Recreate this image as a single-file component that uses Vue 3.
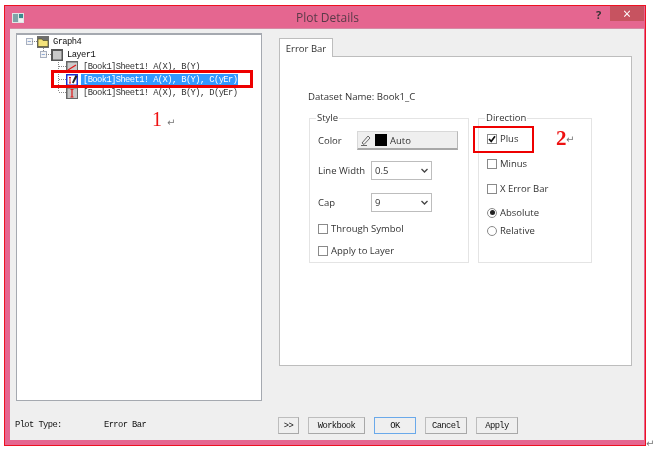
<script setup>
const rows = [
  { text: '[Book1]Sheet1! A(X), B(Y)', kind: 'line' },
  { text: '[Book1]Sheet1! A(X), B(Y), C(yEr)', kind: 'edit', selected: true },
  { text: '[Book1]Sheet1! A(X), B(Y), D(yEr)', kind: 'err' }
]
const actions = [
  { label: 'Workbook', cls: 'wb' },
  { label: 'OK', cls: 'ok' },
  { label: 'Cancel', cls: 'cancel' },
  { label: 'Apply', cls: 'apply' }
]
</script>

<template>
  <div class="shot">
    <div class="window">
      <header class="titlebar">
        <svg class="appicon" width="12" height="10" viewBox="0 0 12 10">
          <rect width="12" height="10" fill="#dfe6e6" />
          <rect x="1" y="1" width="5" height="8" fill="#7fa3a8" />
          <rect x="7" y="1" width="4" height="4" fill="#3c8a8e" />
          <rect x="7" y="6" width="4" height="3" fill="#f2f2f2" />
        </svg>
        <span class="title">Plot Details</span>
        <span class="help">?</span>
        <span class="close">×</span>
      </header>
      <div class="client">
        <div class="main">
          <div class="tree">
            <svg class="lines" width="60" height="70" viewBox="0 0 60 70">
              <path d="M15 6.5H20M26.5 11V16M29 19.5H34M41.5 25V57M42 31.5H49M42 44.5H49M42 57.5H49" stroke="#888" stroke-dasharray="1 1" fill="none" />
            </svg>
            <div class="node n0">
              <span class="exp">−</span>
              <svg class="ico" width="12" height="12" viewBox="0 0 12 12">
                <rect width="12" height="12" fill="#6e6e6e" />
                <path d="M1 3H5L6 4.5H11V10.5H1Z" fill="#f3e27a" stroke="#55502a" stroke-width=".7" />
              </svg>
              <span class="mono">Graph4</span>
            </div>
            <div class="node n1">
              <span class="exp">−</span>
              <svg class="ico" width="12" height="12" viewBox="0 0 12 12">
                <rect width="12" height="12" fill="#555" />
                <rect x="2" y="2" width="8.5" height="8.5" fill="#c8c8c8" />
              </svg>
              <span class="mono">Layer1</span>
            </div>
            <div v-for="r in rows" :key="r.text" class="node n2">
              <svg class="ico" width="12" height="12" viewBox="0 0 12 12">
                <template v-if="r.kind === 'line'">
                  <rect width="12" height="12" fill="#666" />
                  <rect x="1.5" y="1.5" width="9.5" height="9.5" fill="#ccc" />
                  <path d="M2 9L10 4" stroke="#e01818" stroke-width="1.2" />
                </template>
                <template v-else-if="r.kind === 'edit'">
                  <rect x=".75" y=".75" width="10.5" height="10.5" fill="#fff" stroke="#1a2fd0" stroke-width="1.5" />
                  <path d="M4 3.5V9M3 3.5H5M3 9H5" stroke="#e01818" />
                  <path d="M6 8.5L9.5 1L11.5 2.2L7.5 9.5Z" fill="#222" />
                </template>
                <template v-else>
                  <rect width="12" height="12" fill="#666" />
                  <rect x="1.5" y="1.5" width="9.5" height="9.5" fill="#c6c6c6" />
                  <path d="M6 2V10.5M4.5 2.5H7.5M4.5 10H7.5" stroke="#e01818" stroke-width="1.2" />
                </template>
              </svg>
              <span class="mono" :class="{ sel: r.selected }">{{ r.text }}</span>
            </div>
          </div>

          <div class="tabs">
            <div class="tab">Error Bar</div>
            <div class="page">
              <div class="dataset">Dataset Name: Book1_C</div>
              <div class="groups">
                <fieldset class="group style">
                  <legend>Style</legend>
                  <div class="field color">
                    <span class="lab">Color</span>
                    <button class="colorbtn">
                      <svg width="12" height="11" viewBox="0 0 12 11"><path d="M1 10.5H7M2 8L8 1L10 3L4 9.5Z" fill="none" stroke="#444" stroke-width=".8" /></svg>
                      <i class="swatch"></i>
                      <span>Auto</span>
                    </button>
                  </div>
                  <div class="field lw">
                    <span class="lab">Line Width</span>
                    <div class="select"><span>0.5</span><svg width="7" height="5" viewBox="0 0 7 5"><path d="M.5 1L3.5 4L6.5 1" fill="none" stroke="#444" stroke-width="1.3" /></svg></div>
                  </div>
                  <div class="field cap">
                    <span class="lab">Cap</span>
                    <div class="select"><span>9</span><svg width="7" height="5" viewBox="0 0 7 5"><path d="M.5 1L3.5 4L6.5 1" fill="none" stroke="#444" stroke-width="1.3" /></svg></div>
                  </div>
                  <label class="check through"><i class="box"></i>Through Symbol</label>
                  <label class="check layer"><i class="box"></i>Apply to Layer</label>
                </fieldset>
                <fieldset class="group direction">
                  <legend>Direction</legend>
                  <label class="check plus">
                    <i class="box on"><svg width="10" height="10" viewBox="0 0 10 10"><path d="M2 5L4.2 7.4L8 2.2" fill="none" stroke="#111" stroke-width="1.7" /></svg></i>Plus
                  </label>
                  <label class="check minus"><i class="box"></i>Minus</label>
                  <label class="check xerr"><i class="box"></i>X Error Bar</label>
                  <label class="check abs"><i class="radio on"></i>Absolute</label>
                  <label class="check rel"><i class="radio"></i>Relative</label>
                </fieldset>
              </div>
            </div>
          </div>
        </div>

        <footer class="footer">
          <div class="ptype mono"><span class="pl">Plot Type:</span><span>Error Bar</span></div>
          <div class="buttons">
            <button class="btn more mono">&gt;&gt;</button>
            <button v-for="a in actions" :key="a.label" class="btn mono" :class="a.cls">{{ a.label }}</button>
          </div>
        </footer>
      </div>
    </div>

    <i class="mark m1"></i>
    <i class="mark m2"></i>
    <span class="note n-1">1</span>
    <span class="ret r1">↵</span>
    <span class="note n-2">2</span>
    <span class="ret r2">↵</span>
    <span class="ret r3">↵</span>
  </div>
</template>

<style>
html, body { margin: 0; background: #fff; }
</style>

<style scoped>
.shot {
  position: relative;
  width: 655px;
  height: 451px;
  box-sizing: border-box;
  padding: 5px 0 0 4px;
  overflow: hidden;
  background: #fff;
  font-family: "Open Sans", "Noto Sans", sans-serif;
  font-size: 10px;
  color: #333;
  filter: blur(0.3px);
}
.window {
  width: 642px;
  height: 441px;
  box-sizing: border-box;
  border: 1px solid #ee1122;
  background: #e56690;
  display: flex;
  flex-direction: column;
}
.titlebar {
  height: 22px;
  flex: none;
  display: flex;
  align-items: center;
  position: relative;
}
.appicon { margin: 2px 0 0 7px; }
.title {
  position: absolute;
  left: 291px;
  top: 3px;
  font-size: 12px;
  line-height: 17px;
  color: #5a3a48;
}
.help {
  position: absolute;
  left: 591px;
  top: 2px;
  font-size: 11px;
  font-weight: 700;
  line-height: 13px;
  color: #333;
}
.close {
  position: absolute;
  left: 605px;
  top: 0;
  width: 34px;
  height: 15px;
  background: #c75360;
  color: #fff;
  font-size: 14px;
  line-height: 15px;
  text-align: center;
}
.client {
  flex: 1;
  margin: 0 1px 5px 5px;
  box-sizing: border-box;
  background: #efefef;
  border-top: 1px solid #d68aa5;
  padding: 4px 0 0 6px;
  display: flex;
  flex-direction: column;
}
.main { display: flex; align-items: flex-start; gap: 17px; }
.tree {
  position: relative;
  width: 246px;
  height: 368px;
  box-sizing: border-box;
  background: #fff;
  border: 1px solid #a5a9b0;
  border-top-width: 2px;
}
.lines { position: absolute; left: 0; top: 0; }
.node { display: flex; align-items: center; height: 13px; }
.n0 { padding-left: 9px; }
.n1 { padding-left: 23px; margin-bottom: -1px; }
.n2 { padding-left: 49px; }
.exp {
  width: 7px;
  height: 7px;
  box-sizing: border-box;
  border: 1px solid #a8b0c0;
  background: #f4f4f4;
  color: #2b5fb8;
  font-size: 7px;
  line-height: 5px;
  text-align: center;
  margin-right: 4px;
}
.ico { flex: none; margin-right: 4px; position: relative; }
.n2 .ico { margin-right: 3px; }
.mono {
  font-family: "Liberation Mono", "DejaVu Sans Mono", monospace;
  font-size: 8.8px;
  letter-spacing: -0.6px;
  color: #111;
}
.n2 .mono { white-space: nowrap; line-height: 12px; padding: 0 1px 0 2px; color: #333; }
.n2 .sel { background: #3399ff; color: #fff; }
.tabs { padding-top: 5px; width: 353px; }
.tab {
  width: 54px;
  height: 19px;
  box-sizing: border-box;
  background: #fff;
  border: 1px solid #bdbdbd;
  border-bottom: 0;
  font-size: 9.5px;
  line-height: 19px;
  text-align: center;
  position: relative;
  z-index: 1;
  margin-bottom: -1px;
}
.page {
  height: 310px;
  box-sizing: border-box;
  background: #fff;
  border: 1px solid #bdbdbd;
  padding: 33px 0 0 29px;
}
.dataset { font-size: 9.6px; line-height: 14px; margin-left: -1px; }
.groups { display: flex; gap: 9px; margin-top: 8px; }
.group {
  margin: 0;
  box-sizing: border-box;
  height: 151px;
  border: 1px solid #e4e4e4;
  position: relative;
  padding: 0;
}
.style { width: 160px; }
.direction { width: 114px; }
legend { margin-left: 6px; padding: 0 1px; font-size: 9.5px; line-height: 12px; }
.field { display: flex; align-items: center; position: absolute; left: 8px; }
.lab { width: 53px; flex: none; font-size: 9.5px; }
.color { top: 7px; }
.color .lab { width: 39px; }
.lw { top: 37px; }
.cap { top: 69px; }
.colorbtn {
  width: 101px;
  height: 19px;
  box-sizing: border-box;
  display: flex;
  align-items: center;
  gap: 3px;
  padding: 0 0 0 2px;
  background: #efefef;
  border: 1px solid #d8d8d8;
  border-bottom: 2px solid #a8a8a8;
  border-right-color: #b8b8b8;
  font: 9.5px "Open Sans", sans-serif;
  color: #333;
}
.swatch { width: 12px; height: 12px; background: #000; }
.select {
  width: 61px;
  height: 19px;
  box-sizing: border-box;
  border: 1px solid #bdbdbd;
  background: #fff;
  display: flex;
  align-items: center;
  justify-content: space-between;
  padding: 0 3px;
  font-size: 9.5px;
}
.check {
  position: absolute;
  left: 8px;
  display: flex;
  align-items: center;
  gap: 3px;
  font-size: 9.5px;
  line-height: 11px;
  white-space: nowrap;
}
.through { top: 99px; }
.layer { top: 121px; }
.plus { top: 9px; }
.minus { top: 34px; }
.xerr { top: 59px; }
.abs { top: 83px; }
.rel { top: 101px; }
.box {
  width: 10px;
  height: 10px;
  box-sizing: border-box;
  border: 1px solid #8a8a8a;
  background: #fff;
  position: relative;
  display: block;
}
.box svg { position: absolute; left: -1px; top: -1px; }
.radio {
  width: 10px;
  height: 10px;
  box-sizing: border-box;
  border: 1px solid #8a8a8a;
  border-radius: 50%;
  background: #fff;
  display: block;
  position: relative;
}
.radio.on::after {
  content: "";
  position: absolute;
  left: 1.5px;
  top: 1.5px;
  width: 5px;
  height: 5px;
  border-radius: 50%;
  background: #222;
}
.footer { flex: 1; display: flex; align-items: flex-start; padding-top: 16px; }
.ptype { width: 263px; padding-top: 3px; margin-left: -1px; display: flex; }
.pl { width: 89px; }
.buttons { display: flex; gap: 9px; }
.btn {
  height: 17px;
  padding: 0;
  box-sizing: border-box;
  background: #efefef;
  border: 1px solid #bdbdbd;
  border-right-color: #a8a8a8;
  border-bottom-color: #a8a8a8;
  color: #111;
}
.more { width: 21px; }
.wb { width: 57px; }
.ok { width: 42px; border-color: #6aa9ea; }
.cancel { width: 42px; }
.apply { width: 42px; }

.mark {
  position: absolute;
  box-sizing: border-box;
  border: 3px solid #ee0000;
}
.m1 { left: 51px; top: 70px; width: 202px; height: 18px; }
.m2 { left: 473px; top: 126px; width: 61px; height: 27px; border-width: 2px; }
.note { position: absolute; color: #ee1111; line-height: 20px; }
.n-1 { left: 152px; top: 109px; font-size: 20px; font-family: "Liberation Serif", serif; }
.n-2 { left: 556px; top: 128px; font-size: 21px; font-weight: 700; font-family: "Liberation Serif", serif; }
.ret { position: absolute; color: #777; font-family: "DejaVu Sans", sans-serif; font-size: 10px; line-height: 10px; }
.r1 { left: 167px; top: 118px; }
.r2 { left: 566px; top: 135px; }
.r3 { left: 646px; top: 439px; }
</style>
